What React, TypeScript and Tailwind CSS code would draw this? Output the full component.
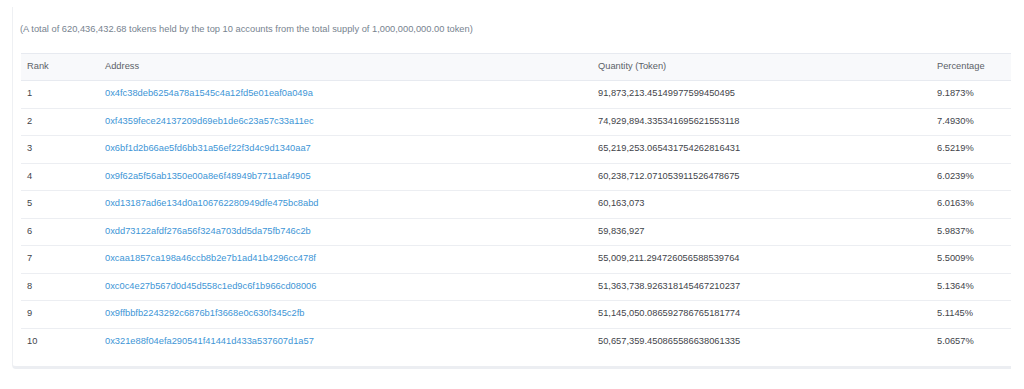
import React from "react";

const rows = [
  ["1", "0x4fc38deb6254a78a1545c4a12fd5e01eaf0a049a", "91,873,213.45149977599450495", "9.1873%"],
  ["2", "0xf4359fece24137209d69eb1de6c23a57c33a11ec", "74,929,894.335341695621553118", "7.4930%"],
  ["3", "0x6bf1d2b66ae5fd6bb31a56ef22f3d4c9d1340aa7", "65,219,253.065431754262816431", "6.5219%"],
  ["4", "0x9f62a5f56ab1350e00a8e6f48949b7711aaf4905", "60,238,712.071053911526478675", "6.0239%"],
  ["5", "0xd13187ad6e134d0a106762280949dfe475bc8abd", "60,163,073", "6.0163%"],
  ["6", "0xdd73122afdf276a56f324a703dd5da75fb746c2b", "59,836,927", "5.9837%"],
  ["7", "0xcaa1857ca198a46ccb8b2e7b1ad41b4296cc478f", "55,009,211.294726056588539764", "5.5009%"],
  ["8", "0xc0c4e27b567d0d45d558c1ed9c6f1b966cd08006", "51,363,738.926318145467210237", "5.1364%"],
  ["9", "0x9ffbbfb2243292c6876b1f3668e0c630f345c2fb", "51,145,050.086592786765181774", "5.1145%"],
  ["10", "0x321e88f04efa290541f41441d433a537607d1a57", "50,657,359.450865586638061335", "5.0657%"],
];

export default function App() {
  return (
    <div
      className="w-[1024px] h-[389px] bg-white overflow-hidden"
      style={{ fontFamily: '"Liberation Sans", Arial, sans-serif' }}
    >
      <div className="ml-[12px] mt-[7px] w-[999px] border-l border-[#eef0f3] border-b-[3px] border-b-[#eceef2] rounded-bl-[4px] pl-[8px] pt-[15px] pb-[10px]">
        <div className="text-[9.3px] leading-[14px] text-[#77838f] -ml-[1px]">
          (A total of 620,436,432.68 tokens held by the top 10 accounts from the total supply of 1,000,000,000.00 token)
        </div>
        <div className="mt-[17px] text-[9.3px]">
          <div className="flex h-[28px] items-center bg-[#f8f9fb] border-t border-b border-[#e7eaf0] text-[#5b6168]">
            <div className="w-[78px] pl-[6px]">Rank</div>
            <div className="w-[493px] pl-[6px]">Address</div>
            <div className="w-[339px] pl-[6px]">Quantity (Token)</div>
            <div className="w-[80px] pl-[6px]">Percentage</div>
          </div>
          {rows.map((r, i) => (
            <div
              key={r[0]}
              className={
                "flex h-[27.5px] items-center text-[#3f444a] " +
                (i < rows.length - 1 ? "border-b border-[#eceef2]" : "")
              }
            >
              <div className="w-[78px] pl-[6px]">{r[0]}</div>
              <div className="w-[493px] pl-[6px] text-[#3d95d6]">{r[1]}</div>
              <div className="w-[339px] pl-[6px]">{r[2]}</div>
              <div className="w-[80px] pl-[6px]">{r[3]}</div>
            </div>
          ))}
        </div>
      </div>
    </div>
  );
}
